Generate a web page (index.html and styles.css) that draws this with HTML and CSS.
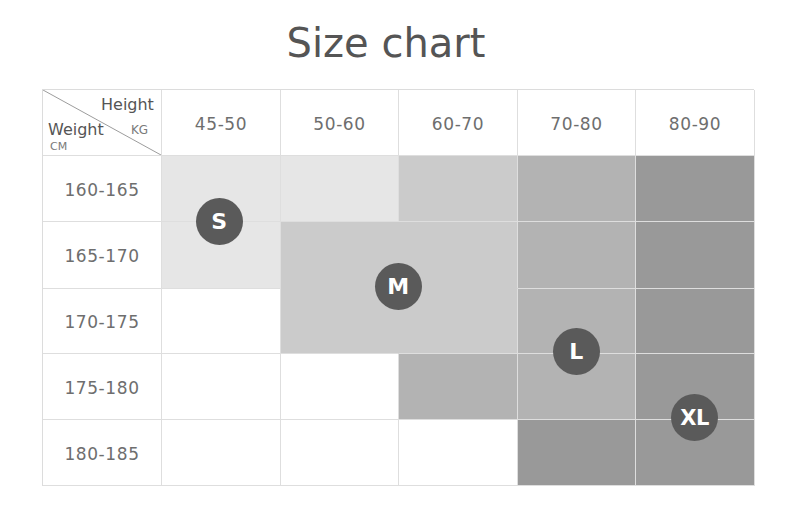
FILE: index.html
```html
<!DOCTYPE html>
<html>
<head>
<meta charset="utf-8">
<link rel="stylesheet" href="styles.css">
</head>
<body>
<div class="page">
  <h1 class="title">Size chart</h1>
  <div class="chart">
    <div class="cell corner">
      <svg class="diag" viewBox="0 0 119 66" preserveAspectRatio="none"><line x1="0" y1="0" x2="119" y2="66" stroke="#9a9a9a" stroke-width="1"/></svg>
      <span class="lbl-height">Height</span>
      <span class="lbl-kg">KG</span>
      <span class="lbl-weight">Weight</span>
      <span class="lbl-cm">CM</span>
    </div>
    <div class="cell head">45-50</div>
    <div class="cell head">50-60</div>
    <div class="cell head">60-70</div>
    <div class="cell head">70-80</div>
    <div class="cell head">80-90</div>

    <div class="cell head">160-165</div>
    <div class="cell c1"></div>
    <div class="cell c1"></div>
    <div class="cell c2"></div>
    <div class="cell c3"></div>
    <div class="cell c4"></div>

    <div class="cell head">165-170</div>
    <div class="cell c1"></div>
    <div class="cell c2 m-tl"></div>
    <div class="cell c2 m-tr"></div>
    <div class="cell c3"></div>
    <div class="cell c4"></div>

    <div class="cell head">170-175</div>
    <div class="cell"></div>
    <div class="cell c2 m-bl"></div>
    <div class="cell c2 m-br"></div>
    <div class="cell c3"></div>
    <div class="cell c4"></div>

    <div class="cell head">175-180</div>
    <div class="cell"></div>
    <div class="cell"></div>
    <div class="cell c3"></div>
    <div class="cell c3"></div>
    <div class="cell c4"></div>

    <div class="cell head">180-185</div>
    <div class="cell"></div>
    <div class="cell"></div>
    <div class="cell"></div>
    <div class="cell c4"></div>
    <div class="cell c4"></div>

    <span class="badge b-s">S</span>
    <span class="badge b-m">M</span>
    <span class="badge b-l">L</span>
    <span class="badge b-xl">XL</span>
  </div>
</div>
</body>
</html>
```
FILE: styles.css
```css
html, body {
  margin: 0;
  padding: 0;
  background: #ffffff;
}
body {
  font-family: "DejaVu Sans", Verdana, sans-serif;
  width: 800px;
  height: 521px;
  overflow: hidden;
}
.page {
  display: flex;
  flex-direction: column;
  padding-left: 42px;
}
.title {
  margin: 0;
  height: 89px;
  line-height: 86px;
  font-size: 40px;
  font-weight: normal;
  color: #555555;
  width: 688px;
  text-align: center;
}
.chart {
  position: relative;
  width: 712px;
  display: grid;
  grid-template-columns: 119px 119px 118px 119px 118px 119px;
  grid-template-rows: 66px 66px 67px 65px 66px 66px;
  border-top: 1px solid #dcdcdc;
  border-left: 1px solid #dcdcdc;
  box-sizing: border-box;
}
.cell {
  box-sizing: border-box;
  border-right: 1px solid #dedede;
  border-bottom: 1px solid #dedede;
  display: flex;
  align-items: center;
  justify-content: center;
}
.head {
  font-size: 17px;
  color: #6e6e6e;
  letter-spacing: 0.6px;
  padding-top: 2px;
}
.c1 { background: #e6e6e6; }
.c2 { background: #cbcbcb; }
.c3 { background: #b3b3b3; }
.c4 { background: #999999; }
.m-tl { border-right-color: #cbcbcb; border-bottom-color: #cbcbcb; }
.m-tr { border-bottom-color: #cbcbcb; }
.m-bl { border-right-color: #cbcbcb; }

.corner {
  position: relative;
  display: block;
  padding-top: 0;
}
.diag {
  position: absolute;
  left: 0;
  top: 0;
  width: 100%;
  height: 100%;
}
.lbl-height {
  position: absolute;
  left: 58px;
  top: 5px;
  font-size: 16px;
  color: #555555;
}
.lbl-weight {
  position: absolute;
  left: 5px;
  top: 30px;
  font-size: 16px;
  color: #555555;
}
.lbl-kg {
  position: absolute;
  left: 88px;
  top: 33px;
  font-size: 12px;
  color: #7a7a7a;
}
.lbl-cm {
  position: absolute;
  left: 7px;
  top: 50px;
  font-size: 11px;
  color: #7a7a7a;
}
.badge {
  position: absolute;
  width: 47px;
  height: 47px;
  margin: -24px 0 0 -24px;
  border-radius: 50%;
  background: #5a5a5a;
  color: #ffffff;
  font-weight: bold;
  font-size: 22px;
  display: flex;
  align-items: center;
  justify-content: center;
  letter-spacing: 0.5px;
}
.b-s { left: 177px; top: 132px; }
.b-m { left: 356px; top: 197px; }
.b-l { left: 534px; top: 262px; }
.b-xl { left: 652px; top: 328px; font-size: 21px; letter-spacing: -0.5px; }
```
